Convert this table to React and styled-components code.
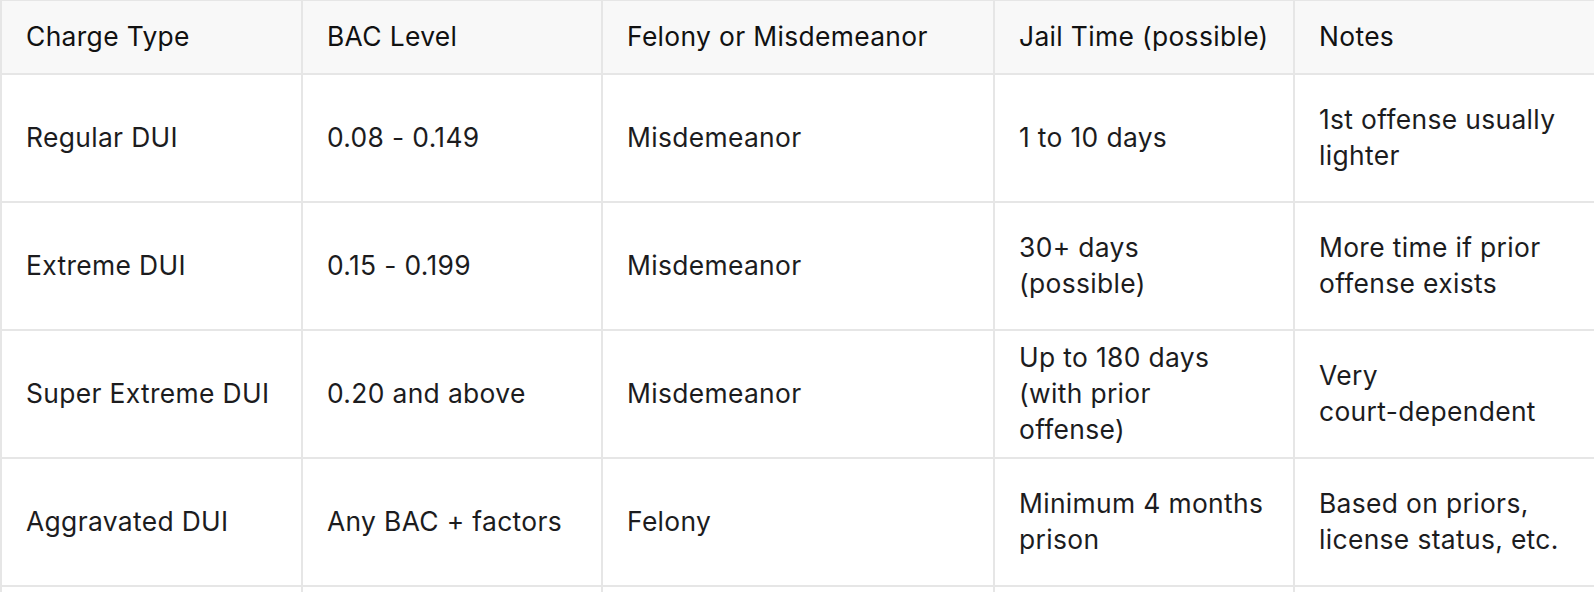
import React from 'react';
import styled, { createGlobalStyle } from 'styled-components';

const GlobalStyle = createGlobalStyle`
  html, body {
    margin: 0;
    padding: 0;
    background: #fff;
    overflow: hidden;
  }
  body {
    font-family: Inter, "Noto Sans", "Liberation Sans", sans-serif;
    color: #1c1c1e;
  }
`;

const Table = styled.table`
  border-collapse: collapse;
  table-layout: fixed;
  width: 1600px;
  font-size: 26.4px;
  line-height: 36px;
  letter-spacing: 0.35px;
`;

const HeadCell = styled.th`
  height: 73px;
  box-sizing: border-box;
  padding: 0 24px 2px;
  background: #f8f8f8;
  border: 2px solid #e6e6e6;
  border-top-width: 1px;
  text-align: left;
  font-weight: 400;
  color: #111;
  vertical-align: middle;
`;

// line breaks in the data are kept, so the wrapping matches the original
const Cell = styled.td`
  height: 128px;
  box-sizing: border-box;
  padding: 4px 24px 6px;
  border: 2px solid #e6e6e6;
  vertical-align: middle;
  font-weight: 400;
  color: #1c1c1e;
  white-space: pre-line;
`;

const columns = [
  { title: 'Charge Type', width: 301 },
  { title: 'BAC Level', width: 300 },
  { title: 'Felony or Misdemeanor', width: 392 },
  { title: 'Jail Time (possible)', width: 300 },
  { title: 'Notes', width: 307 },
];

const rows = [
  ['Regular DUI', '0.08 - 0.149', 'Misdemeanor', '1 to 10 days', '1st offense usually\nlighter'],
  ['Extreme DUI', '0.15 - 0.199', 'Misdemeanor', '30+ days\n(possible)', 'More time if prior\noffense exists'],
  ['Super Extreme DUI', '0.20 and above', 'Misdemeanor', 'Up to 180 days\n(with prior\noffense)', 'Very\ncourt-dependent'],
  ['Aggravated DUI', 'Any BAC + factors', 'Felony', 'Minimum 4 months\nprison', 'Based on priors,\nlicense status, etc.'],
  ['', '', '', '', ''],
];

export default function App() {
  return (
    <>
      <GlobalStyle />
      <Table>
        <colgroup>
          {columns.map((c) => (
            <col key={c.title} style={{ width: c.width }} />
          ))}
        </colgroup>
        <thead>
          <tr>
            {columns.map((c) => (
              <HeadCell key={c.title}>{c.title}</HeadCell>
            ))}
          </tr>
        </thead>
        <tbody>
          {rows.map((r, i) => (
            <tr key={i}>
              {r.map((v, j) => (
                <Cell key={j}>{v}</Cell>
              ))}
            </tr>
          ))}
        </tbody>
      </Table>
    </>
  );
}
